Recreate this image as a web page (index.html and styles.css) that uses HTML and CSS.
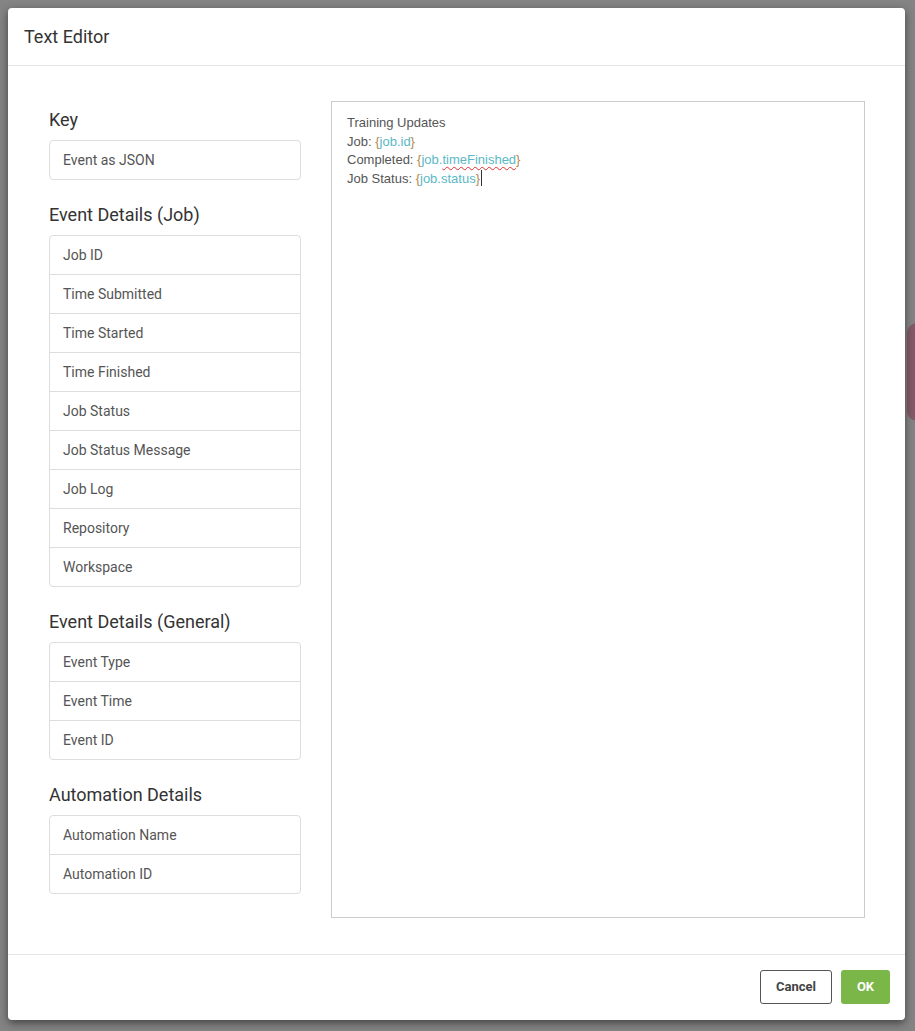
FILE: index.html
```html
<!DOCTYPE html>
<html lang="en">

<head>
  <meta charset="UTF-8" />
  <title>Text Editor</title>
  <link rel="stylesheet" href="styles.css">
</head>

<body>
  <div class="backdrop-tab"></div>

  <div class="modal">
    <div class="modal-header">Text Editor</div>

    <div class="modal-body">
      <div class="keys">
        <h3>Key</h3>
        <ul class="key-list">
          <li>Event as JSON</li>
        </ul>

        <h3>Event Details (Job)</h3>
        <ul class="key-list">
          <li>Job ID</li>
          <li>Time Submitted</li>
          <li>Time Started</li>
          <li>Time Finished</li>
          <li>Job Status</li>
          <li>Job Status Message</li>
          <li>Job Log</li>
          <li>Repository</li>
          <li>Workspace</li>
        </ul>

        <h3>Event Details (General)</h3>
        <ul class="key-list">
          <li>Event Type</li>
          <li>Event Time</li>
          <li>Event ID</li>
        </ul>

        <h3>Automation Details</h3>
        <ul class="key-list">
          <li>Automation Name</li>
          <li>Automation ID</li>
        </ul>
      </div>

      <div class="editor">
        <p>Training Updates</p>
        <p>Job: <span class="brace">{</span><span class="var">job.id</span><span class="brace">}</span></p>
        <p>Completed: <span class="brace">{</span><span class="var">job.<span class="misspelled">timeFinished</span></span><span class="brace">}</span></p>
        <p>Job Status: <span class="brace">{</span><span class="var">job.status</span><span class="brace">}</span><span class="caret"></span></p>
      </div>
    </div>

    <div class="modal-footer">
      <button class="btn btn-cancel">Cancel</button>
      <button class="btn btn-ok">OK</button>
    </div>
  </div>
</body>

</html>
```

FILE: styles.css
```css
body {
  margin: 0;
  min-height: 1031px;
  background: #848484;
  font-family: Roboto, "Liberation Sans", sans-serif;
  overflow: hidden;
}

/* bit of the page peeking out behind the overlay */
.backdrop-tab {
  position: absolute;
  left: 907px;
  top: 323px;
  width: 20px;
  height: 98px;
  border-radius: 10px;
  background: #845a68;
}

.modal {
  position: relative;
  margin: 8px;
  width: 897px;
  height: 1012px;
  background: #fff;
  border-radius: 4px;
  box-shadow: 0 3px 9px rgba(0, 0, 0, 0.5);
  display: flex;
  flex-direction: column;
}

.modal-header {
  height: 57px;
  padding-left: 16px;
  font-size: 18px;
  line-height: 57px;
  color: #333;
  border-bottom: 1px solid #e5e5e5;
}

.modal-body {
  flex: 1;
  display: flex;
  gap: 30px;
  padding: 35px 40px 36px 41px;
}

.keys {
  width: 252px;
  padding-top: 8px;
}

.keys h3 {
  margin: 24px 0 9px;
  font-size: 18px;
  font-weight: normal;
  line-height: 22px;
  color: #333;
}

.keys h3:first-child {
  margin-top: 0;
}

.key-list {
  list-style: none;
  margin: 0;
  padding: 0;
  border: 1px solid #ddd;
  border-radius: 4px;
}

.key-list li {
  height: 38px;
  padding-left: 13px;
  font-size: 14px;
  line-height: 38px;
  color: #555;
}

.key-list li + li {
  border-top: 1px solid #ddd;
}

.editor {
  flex: 1;
  border: 1px solid #ccc;
  padding: 12px 15px;
  font-family: "Liberation Sans", Arial, sans-serif;
  font-size: 13px;
  line-height: 18.7px;
  color: #555;
}

.editor p {
  margin: 0;
}

.brace {
  color: #b58a4c;
}

.var {
  color: #5bb8c6;
}

.misspelled {
  text-decoration: underline wavy #e03030;
  text-decoration-thickness: 1px;
  text-underline-offset: 2px;
}

.caret {
  display: inline-block;
  width: 1px;
  height: 16px;
  margin-left: 1px;
  vertical-align: -3px;
  background: #333;
}

.modal-footer {
  height: 63px;
  padding: 0 15px 2px 0;
  border-top: 1px solid #e5e5e5;
  display: flex;
  justify-content: flex-end;
  align-items: center;
  gap: 9px;
}

.btn {
  height: 34px;
  padding: 0 15px;
  font-family: Roboto, sans-serif;
  font-size: 13px;
  font-weight: bold;
  border-radius: 3px;
  cursor: pointer;
}

.btn-cancel {
  width: 72px;
  background: #fff;
  color: #444;
  border: 1px solid #555;
}

.btn-ok {
  width: 49px;
  background: #7ab648;
  color: #fff;
  border: none;
}
```
